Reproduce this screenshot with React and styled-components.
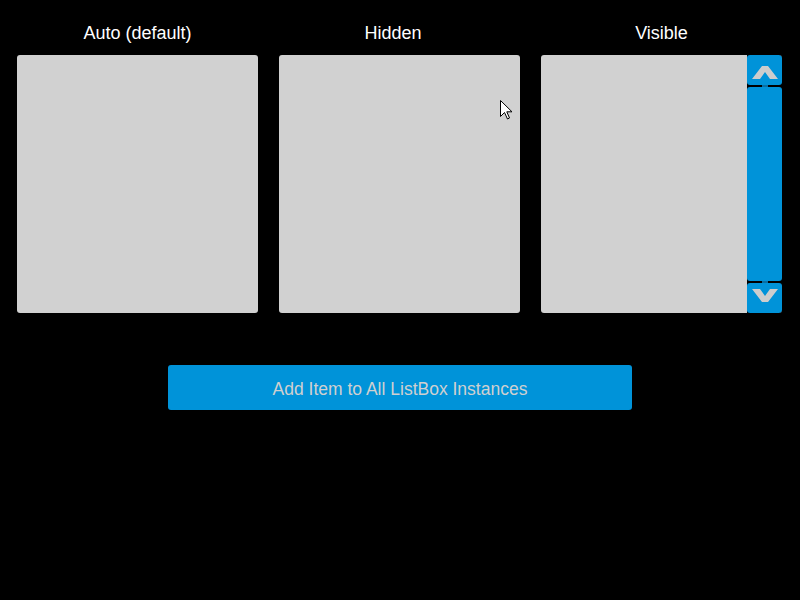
import React from "react";
import styled, { createGlobalStyle } from "styled-components";

const GlobalStyle = createGlobalStyle`
  html, body {
    margin: 0;
    padding: 0;
    background: #000;
    width: 800px;
    height: 600px;
    overflow: hidden;
  }
  body {
    font-family: "Liberation Sans", Arial, sans-serif;
  }
`;

const Page = styled.div`
  position: relative;
  width: 800px;
  height: 600px;
  background: #000;
  padding-top: 22px;
  box-sizing: border-box;
`;

const Columns = styled.div`
  display: grid;
  grid-template-columns: repeat(3, 241px);
  column-gap: 21px;
  padding-left: 17px;
`;

const Column = styled.div`
  display: flex;
  flex-direction: column;
`;

const Label = styled.div`
  color: #fff;
  font-size: 18px;
  line-height: 22px;
  height: 22px;
  text-align: center;
  margin-bottom: 11px;
  padding-right: ${(p) => p.$shift || 0}px;
`;

const ListBox = styled.div`
  display: flex;
  height: 258px;
  background: #d1d1d1;
  border-radius: 3px;
  overflow: hidden;
`;

const ListArea = styled.div`
  flex: 1;
`;

const ScrollBar = styled.div`
  width: 35px;
  display: flex;
  flex-direction: column;
  background: #000;
`;

const ScrollButton = styled.div`
  height: 30px;
  background: #0093d9;
  border-radius: 3px;
  display: flex;
  align-items: center;
  justify-content: center;
`;

const Gap = styled.div`
  height: 2px;
  display: flex;
  justify-content: center;
  &::after {
    content: "";
    width: 6px;
    height: 2px;
    background: #0a6fa3;
  }
`;

const Thumb = styled.div`
  flex: 1;
  background: #0093d9;
  border-radius: 3px;
`;

const Footer = styled.div`
  display: flex;
  justify-content: center;
  margin-top: 52px;
`;

const AddButton = styled.button`
  width: 464px;
  height: 45px;
  border: none;
  border-radius: 3px;
  background: #0093d9;
  color: #d0d0d0;
  font-family: "Liberation Sans", Arial, sans-serif;
  font-size: 17.5px;
  padding: 3px 0 0;
  cursor: pointer;
`;

const Cursor = styled.svg`
  position: absolute;
  left: 500px;
  top: 100px;
`;

const Arrow = ({ down }) => (
  <svg width="35" height="30" viewBox="0 0 35 30" style={{ display: "block" }}>
    <polygon
      points="5,24 15,11 21,11 31,24 23,24 18,17 13,24"
      fill="#cdcdcd"
      transform={down ? "translate(0 30) scale(1 -1)" : undefined}
    />
  </svg>
);

const columns = [
  { title: "Auto (default)", scroll: false, shift: 0 },
  { title: "Hidden", scroll: false, shift: 13 },
  { title: "Visible", scroll: true, shift: 0 },
];

export default function App() {
  return (
    <Page>
      <GlobalStyle />
      <Columns>
        {columns.map((col) => (
          <Column key={col.title}>
            <Label $shift={col.shift}>{col.title}</Label>
            <ListBox>
              <ListArea />
              {col.scroll && (
                <ScrollBar>
                  <ScrollButton>
                    <Arrow />
                  </ScrollButton>
                  <Gap />
                  <Thumb />
                  <Gap />
                  <ScrollButton>
                    <Arrow down />
                  </ScrollButton>
                </ScrollBar>
              )}
            </ListBox>
          </Column>
        ))}
      </Columns>
      <Footer>
        <AddButton>Add Item to All ListBox Instances</AddButton>
      </Footer>
      <Cursor width="13" height="20" viewBox="0 0 13 20">
        <path
          d="M0.5,0.5 L0.5,16.5 L4.5,12.5 L7.5,19 L9.5,18 L6.8,11.8 L12,11.8 Z"
          fill="#fff"
          stroke="#000"
          strokeWidth="1"
        />
      </Cursor>
    </Page>
  );
}
